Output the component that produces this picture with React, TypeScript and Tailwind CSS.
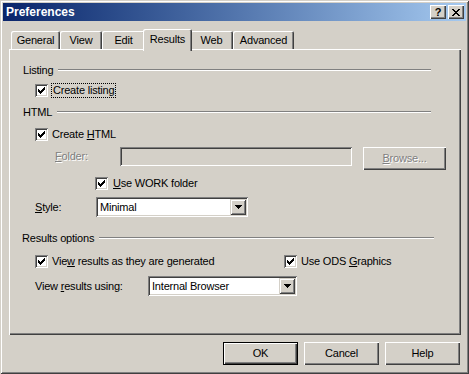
import React from "react";

const Check = () => (
  <svg width="7" height="7" viewBox="0 0 7 7" shapeRendering="crispEdges">
    {[2, 3, 4, 3, 2, 1, 0].map((y, x) => (
      <rect key={x} x={x} y={y} width="1" height="3" fill="#000" />
    ))}
  </svg>
);

const Checkbox = () => (
  <div className="w-[13px] h-[13px] shrink-0 bg-white flex items-center justify-center shadow-[inset_1px_1px_0_#808080,inset_-1px_-1px_0_#ffffff,inset_2px_2px_0_#404040,inset_-2px_-2px_0_#d4d0c8]">
    <Check />
  </div>
);

const CloseGlyph = () => {
  const rows = [
    [0, 1, 6, 7],
    [1, 2, 5, 6],
    [2, 3, 4, 5],
    [3, 4],
    [2, 3, 4, 5],
    [1, 2, 5, 6],
    [0, 1, 6, 7],
  ];
  return (
    <svg width="8" height="7" viewBox="0 0 8 7" shapeRendering="crispEdges">
      {rows.map((xs, y) => xs.map((x) => <rect key={`${x}-${y}`} x={x} y={y} width="1" height="1" fill="#000" />))}
    </svg>
  );
};

const Arrow = () => (
  <svg width="7" height="4" viewBox="0 0 7 4" shapeRendering="crispEdges">
    <rect x="0" y="0" width="7" height="1" fill="#000" />
    <rect x="1" y="1" width="5" height="1" fill="#000" />
    <rect x="2" y="2" width="3" height="1" fill="#000" />
    <rect x="3" y="3" width="1" height="1" fill="#000" />
  </svg>
);

const Select = ({ value, className }: { value: string; className: string }) => (
  <div className={`h-[20px] bg-white flex items-center pl-[4px] pr-[2px] shadow-[inset_1px_1px_0_#808080,inset_-1px_-1px_0_#ffffff,inset_2px_2px_0_#404040,inset_-2px_-2px_0_#d4d0c8] ${className}`}>
    <span className="flex-1">{value}</span>
    <div className="w-[16px] h-[16px] bg-[#d4d0c8] flex items-center justify-center shadow-[inset_1px_1px_0_#d4d0c8,inset_-1px_-1px_0_#404040,inset_2px_2px_0_#ffffff,inset_-2px_-2px_0_#808080]">
      <Arrow />
    </div>
  </div>
);

const GroupHeader = ({ label, className }: { label: string; className: string }) => (
  <div className={`flex items-center pl-[14px] ${className}`}>
    <span>{label}</span>
    <div className="ml-[5px] flex-1 h-[2px] border-t border-t-[#808080] border-b border-b-white" />
  </div>
);

const tabs = [
  { label: "General", w: "w-[49px]" },
  { label: "View", w: "w-[42px]" },
  { label: "Edit", w: "w-[43px]" },
  { label: "Results", w: "w-[49px]", selected: true },
  { label: "Web", w: "w-[43px]" },
  { label: "Advanced", w: "w-[61px]" },
];

const Button = ({ label, isDefault }: { label: string; isDefault?: boolean }) =>
  isDefault ? (
    <div className="w-[75px] h-[23px] border border-black">
      <div className="w-full h-full flex items-center justify-center shadow-[inset_1px_1px_0_#ffffff,inset_-1px_-1px_0_#404040,inset_-2px_-2px_0_#808080]">
        {label}
      </div>
    </div>
  ) : (
    <div className="w-[75px] h-[23px] flex items-center justify-center shadow-[inset_1px_1px_0_#ffffff,inset_-1px_-1px_0_#404040,inset_-2px_-2px_0_#808080]">
      {label}
    </div>
  );

export default function App() {
  return (
    <div className="w-[469px] h-[374px] bg-[#d4d0c8] p-[3px] flex flex-col font-['Liberation_Sans',Arial,sans-serif] text-[11px] leading-none text-black tracking-[-0.2px] shadow-[inset_1px_1px_0_#d4d0c8,inset_-1px_-1px_0_#404040,inset_2px_2px_0_#ffffff,inset_-2px_-2px_0_#808080]">
      {/* title bar */}
      <div className="h-[18px] flex items-center bg-linear-to-r from-[#0a246a] to-[#a6caf0] pl-[3px] pr-[2px]">
        <span className="flex-1 text-white font-bold text-[12px] tracking-normal">Preferences</span>
        <div className="flex gap-[2px]">
          <div className="w-[16px] h-[14px] bg-[#d4d0c8] flex items-center justify-center font-bold text-[11px] shadow-[inset_1px_1px_0_#ffffff,inset_-1px_-1px_0_#404040,inset_-2px_-2px_0_#808080]">
            ?
          </div>
          <div className="w-[16px] h-[14px] bg-[#d4d0c8] flex items-center justify-center shadow-[inset_1px_1px_0_#ffffff,inset_-1px_-1px_0_#404040,inset_-2px_-2px_0_#808080]">
            <CloseGlyph />
          </div>
        </div>
      </div>

      <div className="flex flex-col pl-[6px] pr-[5px] pt-[8px]">
        {/* tabs */}
        <div className="flex h-[22px] pl-[2px]">
          {tabs.map((t) =>
            t.selected ? (
              <div
                key={t.label}
                className={`relative z-10 -mx-[2px] h-[22px] pb-[2px] bg-[#d4d0c8] rounded-t-[2px] flex items-center justify-center shadow-[inset_1px_1px_0_#ffffff,inset_-1px_0_0_#404040,inset_-2px_0_0_#808080] ${t.w}`}
              >
                {t.label}
              </div>
            ) : (
              <div
                key={t.label}
                className={`mt-[2px] h-[18px] bg-[#d4d0c8] rounded-t-[2px] flex items-center justify-center shadow-[inset_1px_1px_0_#ffffff,inset_-1px_0_0_#404040,inset_-2px_0_0_#808080] ${t.w}`}
              >
                {t.label}
              </div>
            )
          )}
        </div>

        {/* panel */}
        <div className="-mt-[2px] h-[286px] flex flex-col pt-[14px] shadow-[inset_1px_1px_0_#ffffff,inset_-1px_-1px_0_#404040,inset_-2px_-2px_0_#808080]">
          <GroupHeader label="Listing" className="h-[14px] pr-[30px]" />
          <div className="h-[26px] flex items-center pl-[26px] gap-[3px]">
            <Checkbox />
            <span className="border border-dotted border-black px-[1px] h-[15px] flex items-center">Create listing</span>
          </div>
          <GroupHeader label="HTML" className="h-[18px] pr-[30px]" />
          <div className="h-[26px] flex items-center pl-[26px] gap-[4px]">
            <Checkbox />
            <span>
              Create <u>H</u>TML
            </span>
          </div>
          <div className="h-[23px] flex items-start pl-[46px]">
            <span className="w-[65px] h-[19px] flex items-center text-[#808080] [text-shadow:1px_1px_0_#ffffff]">
              <span>
                <u>F</u>older:
              </span>
            </span>
            <div className="w-[232px] h-[19px] bg-[#d4d0c8] shadow-[inset_1px_1px_0_#808080,inset_-1px_-1px_0_#ffffff,inset_2px_2px_0_#404040,inset_-2px_-2px_0_#d4d0c8]" />
            <div className="ml-[11px] w-[83px] h-[23px] flex items-center justify-center text-[#808080] [text-shadow:1px_1px_0_#ffffff] shadow-[inset_1px_1px_0_#ffffff,inset_-1px_-1px_0_#404040,inset_-2px_-2px_0_#808080]">
              <span>
                <u>B</u>rowse...
              </span>
            </div>
          </div>
          <div className="h-[26px] flex items-center pl-[86px] gap-[5px]">
            <Checkbox />
            <span>
              <u>U</u>se WORK folder
            </span>
          </div>
          <div className="h-[22px] flex items-center pl-[26px]">
            <span className="w-[61px]">
              <u>S</u>tyle:
            </span>
            <Select value="Minimal" className="w-[152px]" />
          </div>
          <GroupHeader label="Results options" className="mt-[10px] h-[20px] pr-[27px] !pl-[13px]" />
          <div className="h-[26px] flex items-center pl-[26px]">
            <div className="w-[249px] flex items-center gap-[4px]">
              <Checkbox />
              <span>
                Vie<u>w</u> results as they are generated
              </span>
            </div>
            <div className="flex items-center gap-[4px]">
              <Checkbox />
              <span>
                Use ODS <u>G</u>raphics
              </span>
            </div>
          </div>
          <div className="h-[24px] flex items-center pl-[26px]">
            <span className="w-[113px]">
              View <u>r</u>esults using:
            </span>
            <Select value="Internal Browser" className="w-[149px]" />
          </div>
        </div>

        {/* buttons */}
        <div className="flex justify-end gap-[6px] mt-[7px] pr-[1px]">
          <Button label="OK" isDefault />
          <Button label="Cancel" />
          <Button label="Help" />
        </div>
      </div>
    </div>
  );
}
